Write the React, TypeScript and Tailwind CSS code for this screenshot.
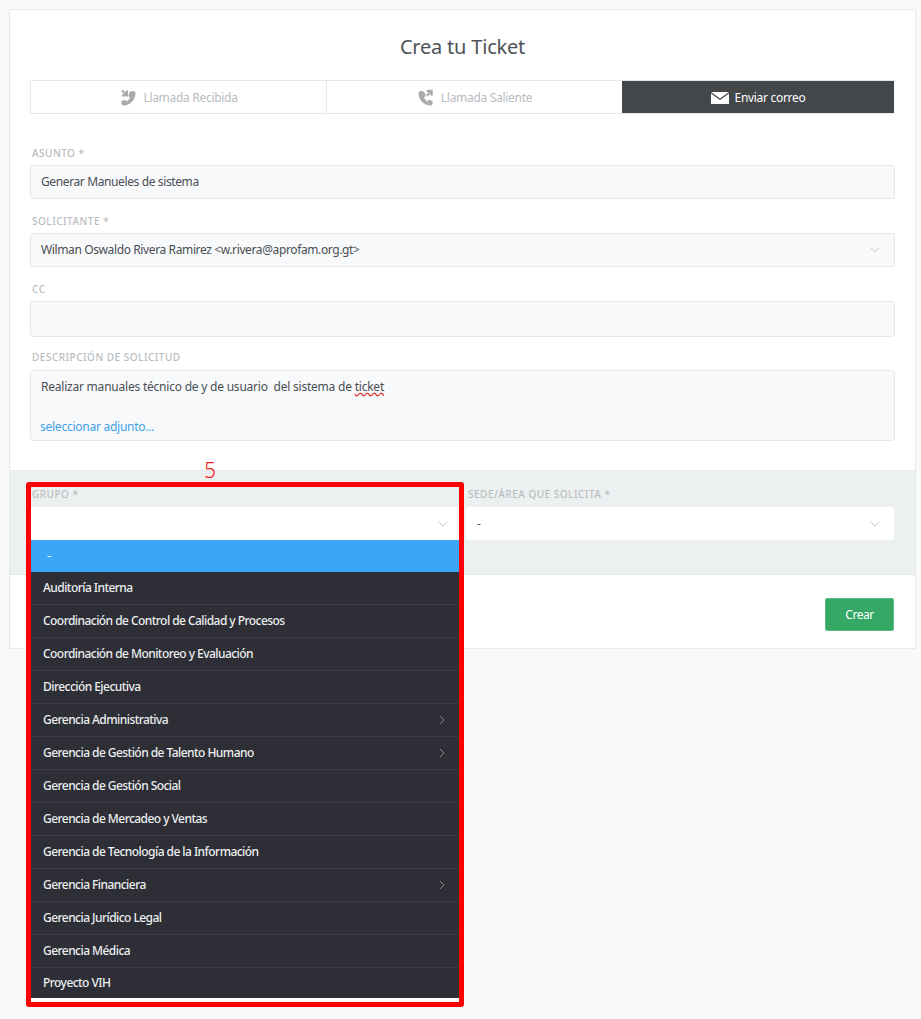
import { ChevronDown, ChevronRight } from "lucide-react";

const groups = [
  { name: "Auditoría Interna" },
  { name: "Coordinación de Control de Calidad y Procesos" },
  { name: "Coordinación de Monitoreo y Evaluación" },
  { name: "Dirección Ejecutiva" },
  { name: "Gerencia Administrativa", sub: true },
  { name: "Gerencia de Gestión de Talento Humano", sub: true },
  { name: "Gerencia de Gestión Social" },
  { name: "Gerencia de Mercadeo y Ventas" },
  { name: "Gerencia de Tecnología de la Información" },
  { name: "Gerencia Financiera", sub: true },
  { name: "Gerencia Jurídico Legal" },
  { name: "Gerencia Médica" },
  { name: "Proyecto VIH" },
];

const PhoneIn = () => (
  <svg viewBox="0 0 24 24" className="w-[18px] h-[18px] fill-[#a9acae]">
    <path d="M19 2.500c1.700 0 3 1 3 2.500 0 9.500-7 17-16 17-1.400 0-2.400-.8-2.600-2l-.4-2.600c-.1-.8.3-1.400 1-1.700l3-1.200c.7-.3 1.400 0 1.800.6l1 1.500c2.200-1.200 4-3.200 5-5.400l-1.500-1c-.6-.4-.8-1.100-.6-1.800l1-3c.3-1 .9-2.400 1.800-2.400h3.500z" />
    <path d="M3 3 5 1l4 4V2h3v8H4V7h3L3 3z" />
  </svg>
);

const PhoneOut = () => (
  <svg viewBox="0 0 24 24" className="w-[18px] h-[18px] fill-[#a9acae]">
    <path d="M5 2.500C3.300 2.500 2 3.500 2 5c0 9.500 7 17 16 17 1.400 0 2.400-.8 2.600-2l.4-2.600c.1-.8-.3-1.400-1-1.700l-3-1.200c-.7-.3-1.400 0-1.800.6l-1 1.500c-2.200-1.200-4-3.200-5-5.400l1.500-1c.6-.4.8-1.100.6-1.800l-1-3C8.900 3.900 8.300 2.500 7.400 2.500H5z" />
    <path d="M14 10l-2-2 4-4h-3V1h8v8h-3V6l-4 4z" />
  </svg>
);

const MailIcon = () => (
  <svg viewBox="0 0 18 12" className="w-[18px] h-[12px] fill-white">
    <path d="M0 0h18L9 6.500 0 0z" />
    <path d="M0 1.500V12h18V1.500L9 8 0 1.500z" />
  </svg>
);

const Label = ({ children, mb = "mb-[6px]" }: { children: React.ReactNode; mb?: string }) => (
  <label className={`block text-[10px] leading-[12px] font-medium tracking-[0.5px] text-[#b9bdc0] uppercase pl-[2px] ${mb}`}>
    {children}
  </label>
);

const Field = ({ children, chevron, h = "h-[34px]" }: { children?: React.ReactNode; chevron?: boolean; h?: string }) => (
  <div className={`${h} flex items-center justify-between rounded-[3px] border border-[#e6e8ea] bg-[#f8f9fb] pl-[10px] pr-[11px] text-[12px] tracking-[-0.38px] text-[#4a4f53]`}>
    <span className="pb-[1px]">{children}</span>
    {chevron && <ChevronDown className="w-4 h-4 text-[#c4c7c9]" strokeWidth={1.5} />}
  </div>
);

export default function App() {
  return (
    <div className="relative min-h-[1019px] bg-[#f8f9fb] pt-[9px] pl-[9px] pr-[5px] font-['Noto_Sans','Open_Sans',sans-serif]">
      <div className="border border-[#e8eaeb] bg-white">
        <div className="px-[20px] pt-[24px] pb-[29px]">
          <h1 className="text-center text-[20px] leading-[26px] tracking-[-0.2px] text-[#4d5357]">Crea tu Ticket</h1>

          <div className="mt-[20px] grid grid-cols-[296px_295px_272px] h-[34px] border border-[#e6e8ea] text-[12px] tracking-[-0.3px] w-[864px]">
            <div className="flex items-center justify-center gap-[6px] pt-[1px] text-[#b9bcbe] border-r border-[#e6e8ea]">
              <PhoneIn />
              Llamada Recibida
            </div>
            <div className="flex items-center justify-center gap-[6px] pt-[1px] text-[#b9bcbe]">
              <PhoneOut />
              Llamada Saliente
            </div>
            <div className="flex items-center justify-center gap-[6px] pt-[1px] bg-[#43474a] text-white">
              <MailIcon />
              Enviar correo
            </div>
          </div>

          <div className="mt-[33px]">
            <Label>Asunto *</Label>
            <Field>Generar Manueles de sistema</Field>
          </div>
          <div className="mt-[16px]">
            <Label>Solicitante *</Label>
            <Field chevron>{"Wilman Oswaldo Rivera Ramirez <w.rivera@aprofam.org.gt>"}</Field>
          </div>
          <div className="mt-[16px]">
            <Label>CC</Label>
            <Field h="h-[36px]" />
          </div>
          <div className="mt-[14px]">
            <Label mb="mb-[7px]">Descripción de solicitud</Label>
            <div className="h-[71px] rounded-[3px] border border-[#e6e8ea] bg-[#f8f9fb] pl-[10px] pt-[8px] text-[12px] tracking-[-0.22px] text-[#4a4f53]">
              <p className="leading-[16px] whitespace-pre">
                {"Realizar manuales técnico de y de usuario  del sistema de "}
                <span className="underline decoration-wavy decoration-[#e02020]">ticket</span>
              </p>
              <a className="block mt-[23px] -ml-[1px] tracking-[-0.25px] text-[#3f9fe8]">seleccionar adjunto...</a>
            </div>
          </div>
        </div>

        <div className="h-[105px] border-y border-[#e6e8ea] bg-[#edf0f1] px-[20px] pt-[17px]">
          <div className="grid grid-cols-[429px_428px] gap-x-[7px]">
            <div>
              <Label>Grupo *</Label>
            </div>
            <div>
              <Label mb="mb-[7px]">Sede/Área que solicita *</Label>
              <div className="h-[33px] flex items-center justify-between rounded-[3px] bg-white pl-[11px] pr-[11px] text-[12px] text-[#4a4f53]">
                <span>-</span>
                <ChevronDown className="w-4 h-4 text-[#c4c7c9]" strokeWidth={1.5} />
              </div>
            </div>
          </div>
        </div>

        <div className="flex justify-end px-[21px] pt-[23px] pb-[17px]">
          <button className="h-[33px] w-[69px] rounded-[2px] border border-[#5cbb85] bg-[#36a866] text-[12px] tracking-[-0.5px] text-white">Crear</button>
        </div>
      </div>

      {/* open group dropdown with the red annotation */}
      <div className="absolute left-[26px] top-[482px] w-[438px] h-[525px] rounded-[3px] border-[5px] border-[#ff0000] bg-transparent">
        <div className="absolute left-0 right-0 top-[20px] h-[33px] bg-white flex items-center justify-end pr-[8px]">
          <ChevronDown className="w-4 h-4 text-[#c4c7c9]" strokeWidth={1.5} />
        </div>
        <div className="absolute left-0 right-0 top-[53px] h-[462px] bg-white">
          <div className="h-[32px] bg-[#3ba6f5] pl-[16px] flex items-center text-[13px] text-white">-</div>
          {groups.map((g, i) => (
            <div
              key={g.name}
              className={`${i === groups.length - 1 ? "h-[30px]" : "h-[33px] border-b border-[#3a3b43]"} flex items-center justify-between bg-[#2d2e36] pl-[12px] pr-[9px] text-[12px] font-medium tracking-[-0.55px] text-[#eceef0]`}
            >
              <span>{g.name}</span>
              {g.sub && <ChevronRight className="w-4 h-4 text-[#85878c]" strokeWidth={1.5} />}
            </div>
          ))}
        </div>
      </div>
      <span className="absolute left-[204px] top-[458px] text-[21px] leading-[24px] font-light text-[#f01818]">5</span>
    </div>
  );
}
